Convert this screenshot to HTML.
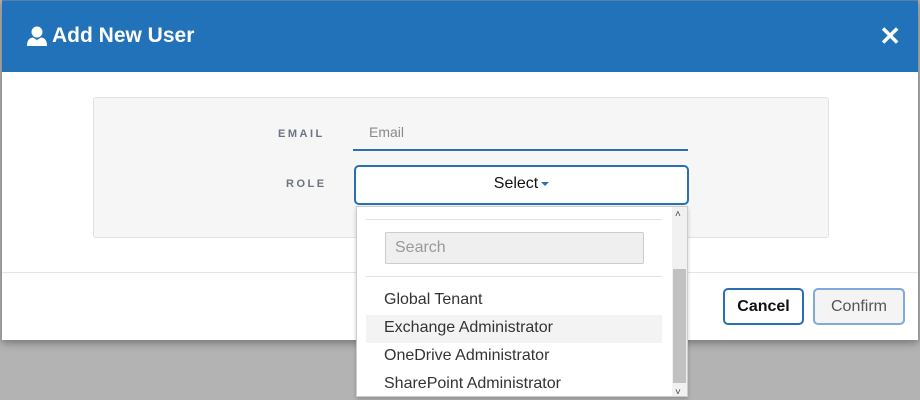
<!DOCTYPE html>
<html><head><style>
*{box-sizing:border-box;margin:0;padding:0}
body{width:920px;height:400px;overflow:hidden;background:#b3b3b3;font-family:"Liberation Sans",sans-serif;position:relative}
.modal{position:absolute;left:2px;top:0;width:916px;height:340px;background:#fff;box-shadow:0 3px 8px rgba(0,0,0,.35)}
.hdr{position:absolute;left:0;top:0;width:916px;height:72px;background:#2272b9;border-top:1px solid #5a7fa6}
.hdr h1{position:absolute;left:50px;top:23px;color:#fff;font-size:21px;font-weight:bold}
.hdr svg{position:absolute;left:25px;top:25px}
.x{position:absolute;right:17px;top:20px;color:#fff;font-size:26px;font-weight:bold}
.panel{position:absolute;left:93px;top:97px;width:736px;height:141px;background:#f6f6f6;border:1px solid #e2e2e2;border-radius:3px}
.lbl{position:absolute;font-size:11px;font-weight:bold;letter-spacing:2.5px;color:#6b7480}
.email{position:absolute;left:353px;top:116px;width:335px;height:35px;border-bottom:2px solid #2a6fb4;color:#8a8a8a;font-size:14px;padding:8px 0 0 16px}
.sel{position:absolute;left:354px;top:165px;width:335px;height:40px;border:2px solid #2a6fb4;border-radius:5px;background:#fff;text-align:center;font-size:16px;padding-top:8px;color:#111}
.sel i{display:inline-block;border:4px solid transparent;border-top:4px solid #2a6fb4;border-bottom:0;vertical-align:middle;margin-left:3px}
.sep{position:absolute;left:2px;top:272px;width:916px;height:1px;background:#e5e5e5}
.btn{position:absolute;top:288px;height:37px;border:2px solid #2a6fb4;border-radius:5px;font-size:16px;text-align:center;padding-top:8px}
.dd{position:absolute;left:356px;top:206px;width:332px;height:191px;background:#fff;border:1px solid #ccc;box-shadow:0 2px 4px rgba(0,0,0,.2);overflow:hidden}
.sb{position:absolute;right:0;top:0;width:15px;height:191px;background:#f1f1f1}
.thumb{position:absolute;right:1px;top:62px;width:13px;height:114px;background:#c1c1c1}
.item{position:absolute;left:9px;width:296px;height:28px;font-size:16px;color:#333;padding:4px 0 0 18px}
</style></head><body>
<div class="modal">
 <div class="hdr">
  <svg width="20" height="20" viewBox="0 0 20 20"><circle cx="10" cy="6" r="5.5" fill="#fff"/><path d="M0 20 Q0 12 6 11.5 L10 14 L14 11.5 Q20 12 20 20Z" fill="#fff"/></svg>
  <h1>Add New User</h1>
  <div class="x">✕</div>
 </div>
</div>
<div class="panel"></div>
<div class="lbl" style="left:278px;top:128px">EMAIL</div>
<div class="lbl" style="left:286px;top:178px">ROLE</div>
<div class="email">Email</div>
<div class="sel">Select<i></i></div>
<div class="sep"></div>
<div class="btn" style="left:723px;width:81px;color:#111;font-weight:bold;background:#fff">Cancel</div>
<div class="btn" style="left:813px;width:92px;color:#555;background:#f4f4f4;border-color:#7ea9d8">Confirm</div>
<div class="dd">
 <div style="position:absolute;left:9px;top:12px;width:296px;height:1px;background:#e2e2e2"></div>
 <div style="position:absolute;left:28px;top:25px;width:259px;height:32px;background:#efefef;border:1px solid #ccc;border-radius:2px;color:#999;font-size:16px;padding:6px 0 0 9px">Search</div>
 <div style="position:absolute;left:9px;top:69px;width:296px;height:1px;background:#e2e2e2"></div>
 <div class="item" style="top:80px">Global Tenant</div>
 <div class="item" style="top:108px;background:#f3f3f3">Exchange Administrator</div>
 <div class="item" style="top:136px">OneDrive Administrator</div>
 <div class="item" style="top:164px">SharePoint Administrator</div>
 <div class="sb"><div class="thumb"></div>
  <div style="position:absolute;left:3px;top:2px;font-size:10px;color:#444">˄</div>
  <div style="position:absolute;left:3px;bottom:0;font-size:10px;color:#444">˅</div></div>
</div>
</body></html>
